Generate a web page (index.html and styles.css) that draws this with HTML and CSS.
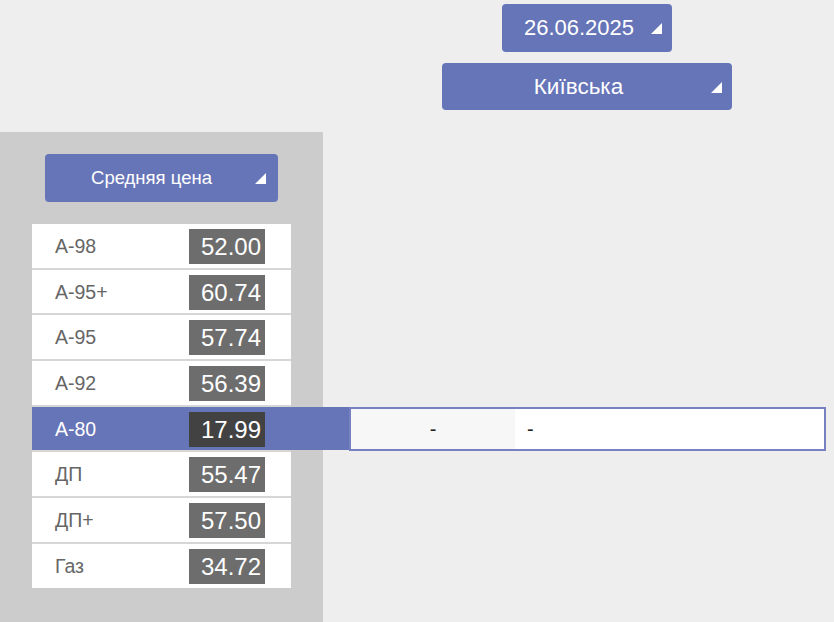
FILE: index.html
```html
<!DOCTYPE html>
<html lang="uk">
<head>
  <meta charset="UTF-8">
  <meta name="viewport" content="width=device-width, initial-scale=1.0">
  <title>Ціни на пальне</title>
  <link rel="stylesheet" href="styles.css">
</head>
<body>
<div class="top">
  <button class="select date-select">26.06.2025<span class="arrow"></span></button>
  <button class="select region-select">Київська<span class="arrow"></span></button>
</div>
<div class="panel">
  <button class="select mode-select">Средняя цена<span class="arrow"></span></button>
  <div class="fuel-list">
    <div class="fuel-row"><span class="fuel-name">А-98</span><span class="fuel-price">52.00</span></div>
    <div class="fuel-row"><span class="fuel-name">А-95+</span><span class="fuel-price">60.74</span></div>
    <div class="fuel-row"><span class="fuel-name">А-95</span><span class="fuel-price">57.74</span></div>
    <div class="fuel-row"><span class="fuel-name">А-92</span><span class="fuel-price">56.39</span></div>
    <div class="fuel-row active">
      <span class="fuel-name">А-80</span><span class="fuel-price">17.99</span>
      <div class="fuel-detail">
        <div class="detail-left">-</div>
        <div class="detail-right">-</div>
      </div>
    </div>
    <div class="fuel-row"><span class="fuel-name">ДП</span><span class="fuel-price">55.47</span></div>
    <div class="fuel-row"><span class="fuel-name">ДП+</span><span class="fuel-price">57.50</span></div>
    <div class="fuel-row"><span class="fuel-name">Газ</span><span class="fuel-price">34.72</span></div>
  </div>
</div>
</body>
</html>
```
FILE: styles.css
```css
body {
  margin: 0;
  background: #eeeeee;
  font-family: "Liberation Sans", Arial, sans-serif;
  color: #555;
  height: 622px;
  overflow: hidden;
}
.top {
  display: flex;
  flex-direction: column;
  align-items: center;
  gap: 11px;
  padding: 4px 0 0 340px;
  height: 106px;
  box-sizing: content-box;
}
.select {
  position: relative;
  background-color: #6674b8;
  color: white;
  border: none;
  border-radius: 4px;
  font-family: "Liberation Sans", Arial, sans-serif;
  cursor: pointer;
  padding: 0;
}
.arrow {
  position: absolute;
  right: 10px;
  top: 50%;
  margin-top: -5px;
  width: 0;
  height: 0;
  border-left: 11px solid transparent;
  border-bottom: 11px solid white;
}
.date-select {
  width: 170px;
  height: 48px;
  font-size: 22px;
  padding-right: 16px;
}
.region-select {
  width: 290px;
  height: 47px;
  font-size: 22.5px;
  padding-right: 17px;
}
.panel {
  margin-top: 22px;
  width: 323px;
  height: 490px;
  background: #cccccc;
  padding-top: 22px;
  box-sizing: border-box;
}
.mode-select {
  margin-left: 45px;
  width: 233px;
  height: 48px;
  font-size: 18.5px;
  padding-right: 20px;
}
.mode-select .arrow {
  right: 12px;
}
.fuel-list {
  margin: 22px 0 0 32px;
  width: 259px;
  display: flex;
  flex-direction: column;
  gap: 2px;
  background: #d6d6d6;
}
.fuel-row {
  position: relative;
  display: flex;
  align-items: flex-start;
  justify-content: space-between;
  height: 43.7px;
  padding: 5px 26px 0 23px;
  box-sizing: border-box;
  background: white;
}
.fuel-name {
  font-size: 19.5px;
  line-height: 35px;
  color: #666;
}
.fuel-price {
  width: 76px;
  height: 35px;
  line-height: 35px;
  background: #6d6d6d;
  color: white;
  font-size: 24px;
  text-align: right;
  padding-right: 4px;
  box-sizing: border-box;
}
.fuel-row.active {
  background: #6674b8;
  width: 317px;
  margin-right: -58px;
  padding-right: 84px;
}
.fuel-row.active .fuel-name {
  color: white;
}
.fuel-row.active .fuel-price {
  background: #424242;
}
.fuel-detail {
  position: absolute;
  left: 317px;
  top: 0;
  width: 477px;
  height: 44px;
  border: 2px solid #7781c2;
  box-sizing: border-box;
  background: white;
  display: flex;
  color: #222;
  font-size: 20px;
  line-height: 40px;
}
.detail-left {
  width: 164px;
  background: #f7f7f7;
  text-align: center;
}
.detail-right {
  flex: 1;
  padding-left: 12px;
}
```
